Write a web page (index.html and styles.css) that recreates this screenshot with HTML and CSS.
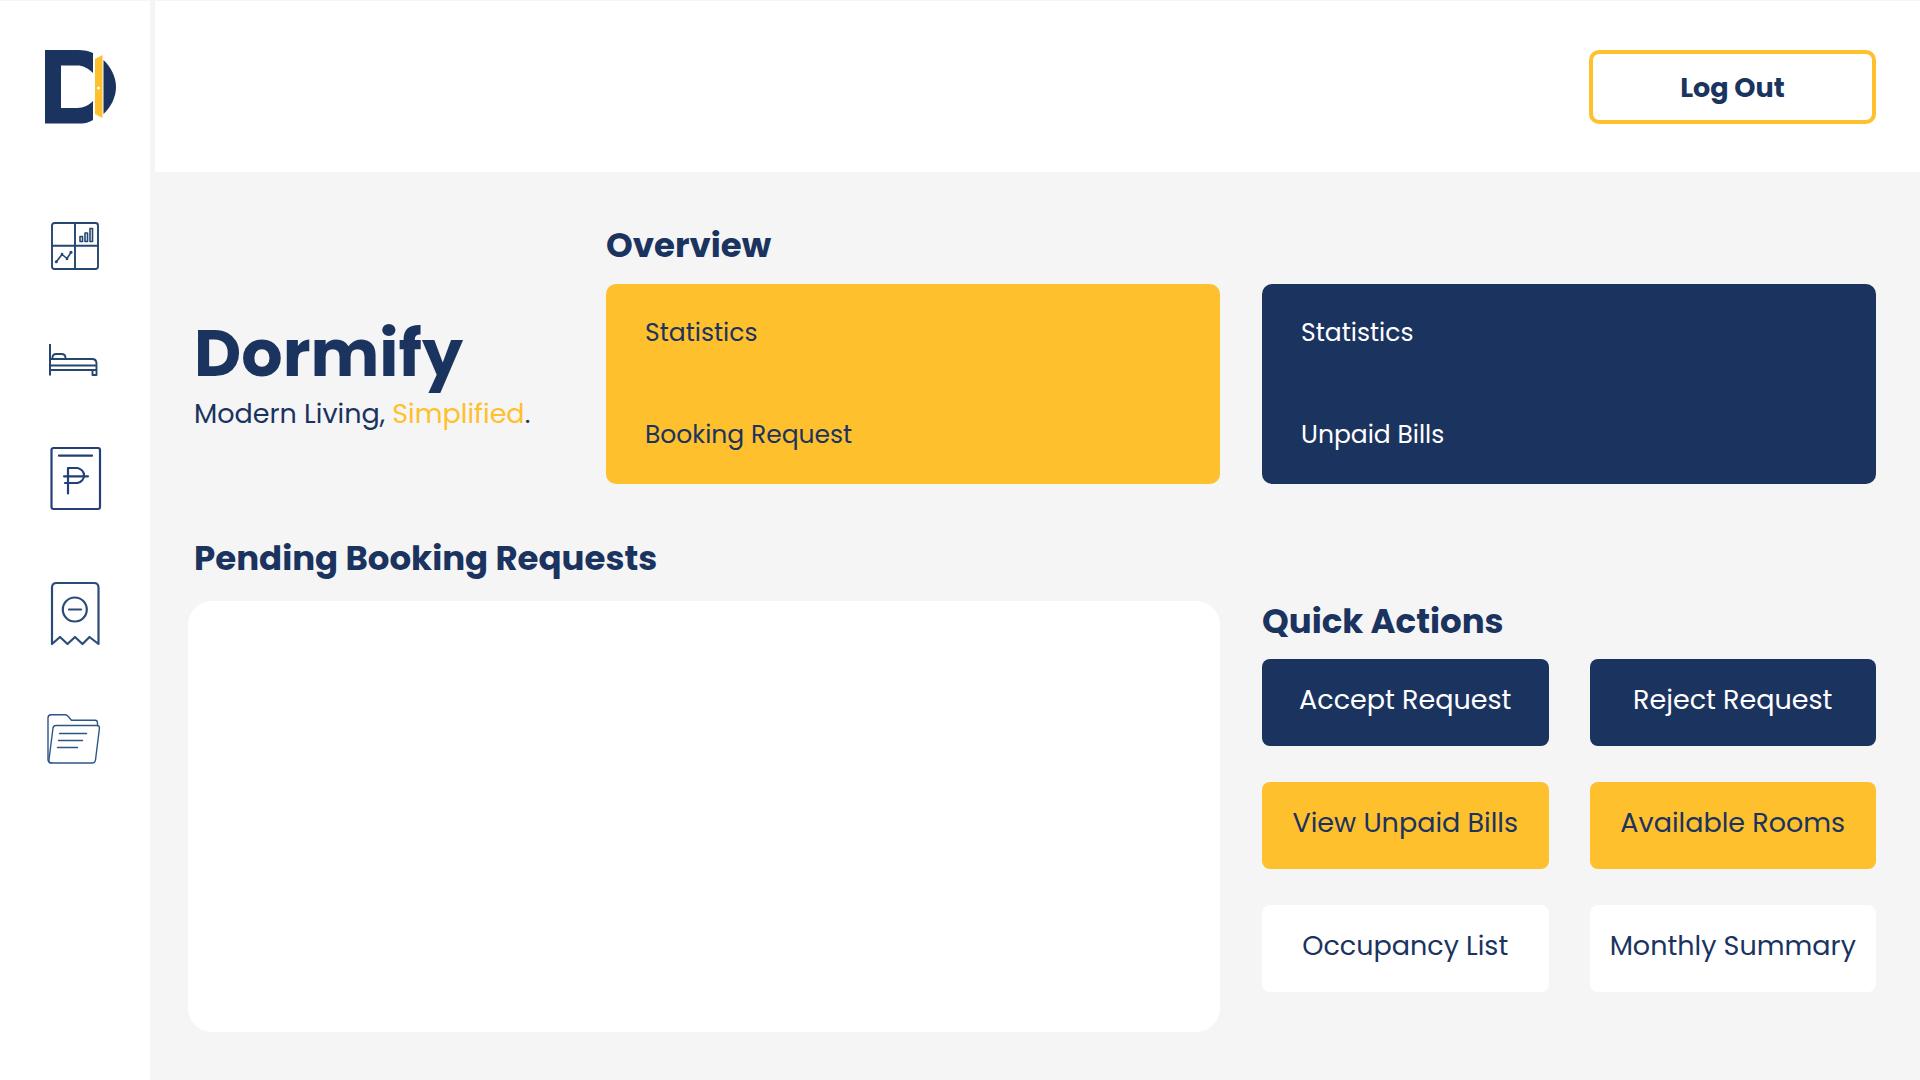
FILE: index.html
```html
<!DOCTYPE html>
<html lang="en">
<head>
<meta charset="utf-8">
<meta name="viewport" content="width=device-width, initial-scale=1">
<title>Dormify</title>
<link rel="stylesheet" href="styles.css">
</head>
<body>
<div class="app">
  <aside class="sidebar">
    <a class="logo" href="#" aria-label="Dormify">
      <svg width="72" height="74" viewBox="0 0 72 74">
        <path class="navy" d="M0 0H33C39 0 44 1 48 3V23C43 18 38 15.500 32 15.500H16V58H32C39 58 44 55 48 51V70C43 73 39 73.500 33 73.500H0Z"/>
        <path class="gold" d="M50 9L57.500 5V68L50 64Z"/>
        <circle cx="53.500" cy="38" r="1.500" fill="#fff"/>
        <path class="navy" d="M58.500 10C66 17 71 27 71 37S66 57 58.500 64Z"/>
      </svg>
    </a>
    <nav class="nav" aria-label="Main">
      <a href="#" aria-label="Dashboard">
        <svg class="icon" width="72" height="50" viewBox="0 0 72 50">
          <rect x="7" y="1" width="46" height="46" rx="2.500"/>
          <path d="M30 1V47M7 23.700H53"/>
          <path class="thin" d="M35 14.500H37.500V19.500H35ZM40 11H42.500V19.500H40ZM45 6.500H47.500V19.500H45Z"/>
          <path class="thin" d="M11.500 39.500L17 32.500L22 36.500L26 30.500"/>
          <g class="dot"><circle cx="11.300" cy="39.700" r="1.500"/><circle cx="17" cy="32" r="1.300"/><circle cx="22" cy="37" r="1.300"/><circle cx="26" cy="30.300" r="1.500"/></g>
        </svg>
      </a>
      <a href="#" aria-label="Rooms">
        <svg class="icon" width="72" height="38" viewBox="0 0 72 38">
          <path d="M4 4V35.500H6V4Z" class="dot"/>
          <path d="M5.500 19H47Q51.500 19 51.500 23.500V35H47.500V30.500M5.500 25.500H51.500M5.500 30H51.500"/>
          <path d="M7.500 19V17.500Q7.500 14 11 14H16.500Q20.500 14 20.500 18V19"/>
        </svg>
      </a>
      <a href="#" aria-label="Payments">
        <svg class="icon peso" width="72" height="66" viewBox="0 0 72 66">
          <rect x="6.500" y="2" width="48.500" height="61" rx="2"/>
          <path d="M14 9.700H47M23 47.500V22H32.500A9 7.800 0 0 1 32.500 37H20M19 30.300H43"/>
        </svg>
      </a>
      <a href="#" aria-label="Unpaid bills">
        <svg class="icon bill" width="72" height="66" viewBox="0 0 72 66">
          <path d="M7 64V7.500Q7 3 11.500 3H49Q53.500 3 53.500 7.500V64L44.500 57L37.500 64L30 57L22.500 64L15 57Z"/>
          <circle cx="29.800" cy="29.500" r="12"/>
          <path d="M24 29.500H36"/>
        </svg>
      </a>
      <a href="#" aria-label="Reports">
        <svg class="icon folder" width="72" height="52" viewBox="0 0 72 52">
          <path d="M6 49Q3 48.500 3 45.500V4Q3 .8 6 .8H20Q21.500 .8 22.500 1.800L26.500 6.300H50Q52.500 6.300 52.500 9V11.500"/>
          <path d="M11 11.500H52Q54.800 11.500 54.400 14.500L50.500 46Q50 49 47.500 49H6Q3.500 49 4 45.500L8 14Q8.500 11.500 11 11.500Z"/>
          <path d="M14.500 19.500H41.500M13.500 26.500H37.500M12.500 33.500H32.500"/>
        </svg>
      </a>
    </nav>
  </aside>
  <div class="page">
    <header class="topbar"><button class="logout" type="button">Log Out</button></header>
    <main class="content">
      <h2 class="overview-title">Overview</h2>
      <div class="brand">
        <h1>Dormify</h1>
        <p>Modern Living, <span>Simplified</span>.</p>
      </div>
      <article class="card is-gold"><p>Statistics</p><p>Booking Request</p></article>
      <article class="card is-navy"><p>Statistics</p><p>Unpaid Bills</p></article>
      <section class="pending">
        <h2>Pending Booking Requests</h2>
        <div class="panel"></div>
      </section>
      <section class="quick">
        <h2>Quick Actions</h2>
        <div class="actions">
          <button type="button" class="is-navy">Accept Request</button>
          <button type="button" class="is-navy">Reject Request</button>
          <button type="button" class="is-gold">View Unpaid Bills</button>
          <button type="button" class="is-gold">Available Rooms</button>
          <button type="button" class="is-white">Occupancy List</button>
          <button type="button" class="is-white">Monthly Summary</button>
        </div>
      </section>
    </main>
  </div>
</div>
</body>
</html>
```
FILE: styles.css
```css
:root {
  --navy: #1b335f;
  --gold: #ffc02d;
  --bg: #f5f5f5;
}
* { box-sizing: border-box; }
body {
  margin: 0;
  background: var(--bg);
  color: var(--navy);
  font-family: Poppins, Inter, sans-serif;
}
h1, h2, p { margin: 0; }
button { font: inherit; cursor: pointer; }
svg { display: block; }

.app {
  display: flex;
  gap: 5px;
  min-height: 100vh;
  padding-top: 1px;
}
.sidebar {
  flex: 0 0 150px;
  padding: 49px 0 48px 45px;
  background: #fff;
}
.logo, .nav a { display: block; width: 72px; }
.nav {
  display: flex;
  flex-direction: column;
  gap: 68px;
  margin-top: 98px;
}
.navy { fill: var(--navy); }
.gold { fill: var(--gold); }
.icon {
  fill: none;
  stroke: #24466f;
  stroke-width: 1.9;
  stroke-linejoin: round;
  stroke-linecap: round;
}
.icon .thin { stroke-width: 1.6; }
.icon .dot { fill: #24466f; stroke: none; }
.icon.peso { stroke: #233f78; stroke-width: 2.2; }
.icon.bill { stroke: #2b4c78; stroke-width: 2.2; }
.icon.folder { stroke: #2d5585; stroke-width: 1.4; }

.page { flex: 1; min-width: 0; }
.topbar {
  display: flex;
  justify-content: flex-end;
  padding: 49px 44px 48px;
  background: #fff;
}
.logout {
  width: 287px;
  height: 74px;
  padding: 2px 0 0;
  border: 4px solid var(--gold);
  border-radius: 10px;
  background: #fff;
  color: var(--navy);
  font-size: 27px;
  font-weight: 700;
}
.content {
  display: grid;
  grid-template-columns: 376fr 614fr 614fr;
  column-gap: 42px;
  padding: 53px 44px 48px 33px;
}
h2 {
  font-size: 34px;
  line-height: 40px;
  font-weight: 700;
}
.overview-title { grid-column: 2 / 4; margin-bottom: 19px; }
.brand { grid-column: 1; padding: 34px 0 0 6px; white-space: nowrap; }
h1 { font-size: 65px; line-height: 72px; font-weight: 700; }
.brand p { margin-top: 6px; font-size: 27px; line-height: 36px; }
.brand span { color: var(--gold); }
.card {
  display: flex;
  flex-direction: column;
  justify-content: space-between;
  min-height: 200px;
  padding: 33px 39px;
  border-radius: 10px;
  font-size: 25px;
  line-height: 32px;
}
.is-gold { background: var(--gold); color: var(--navy); }
.is-navy { background: var(--navy); color: #fff; }
.is-white { background: #fff; color: var(--navy); }
.pending { grid-column: 1 / 3; margin-top: 54px; }
.pending h2 { padding-left: 6px; }
.panel {
  min-height: 431px;
  margin-top: 23px;
  border-radius: 24px;
  background: #fff;
}
.quick { margin-top: 117px; }
.actions {
  display: grid;
  grid-template-columns: 1fr 1fr;
  gap: 36px 41px;
  margin-top: 18px;
}
.actions button {
  min-height: 87px;
  padding: 0 0 5px;
  border: 0;
  border-radius: 8px;
  font-size: 27px;
  white-space: nowrap;
}
```
